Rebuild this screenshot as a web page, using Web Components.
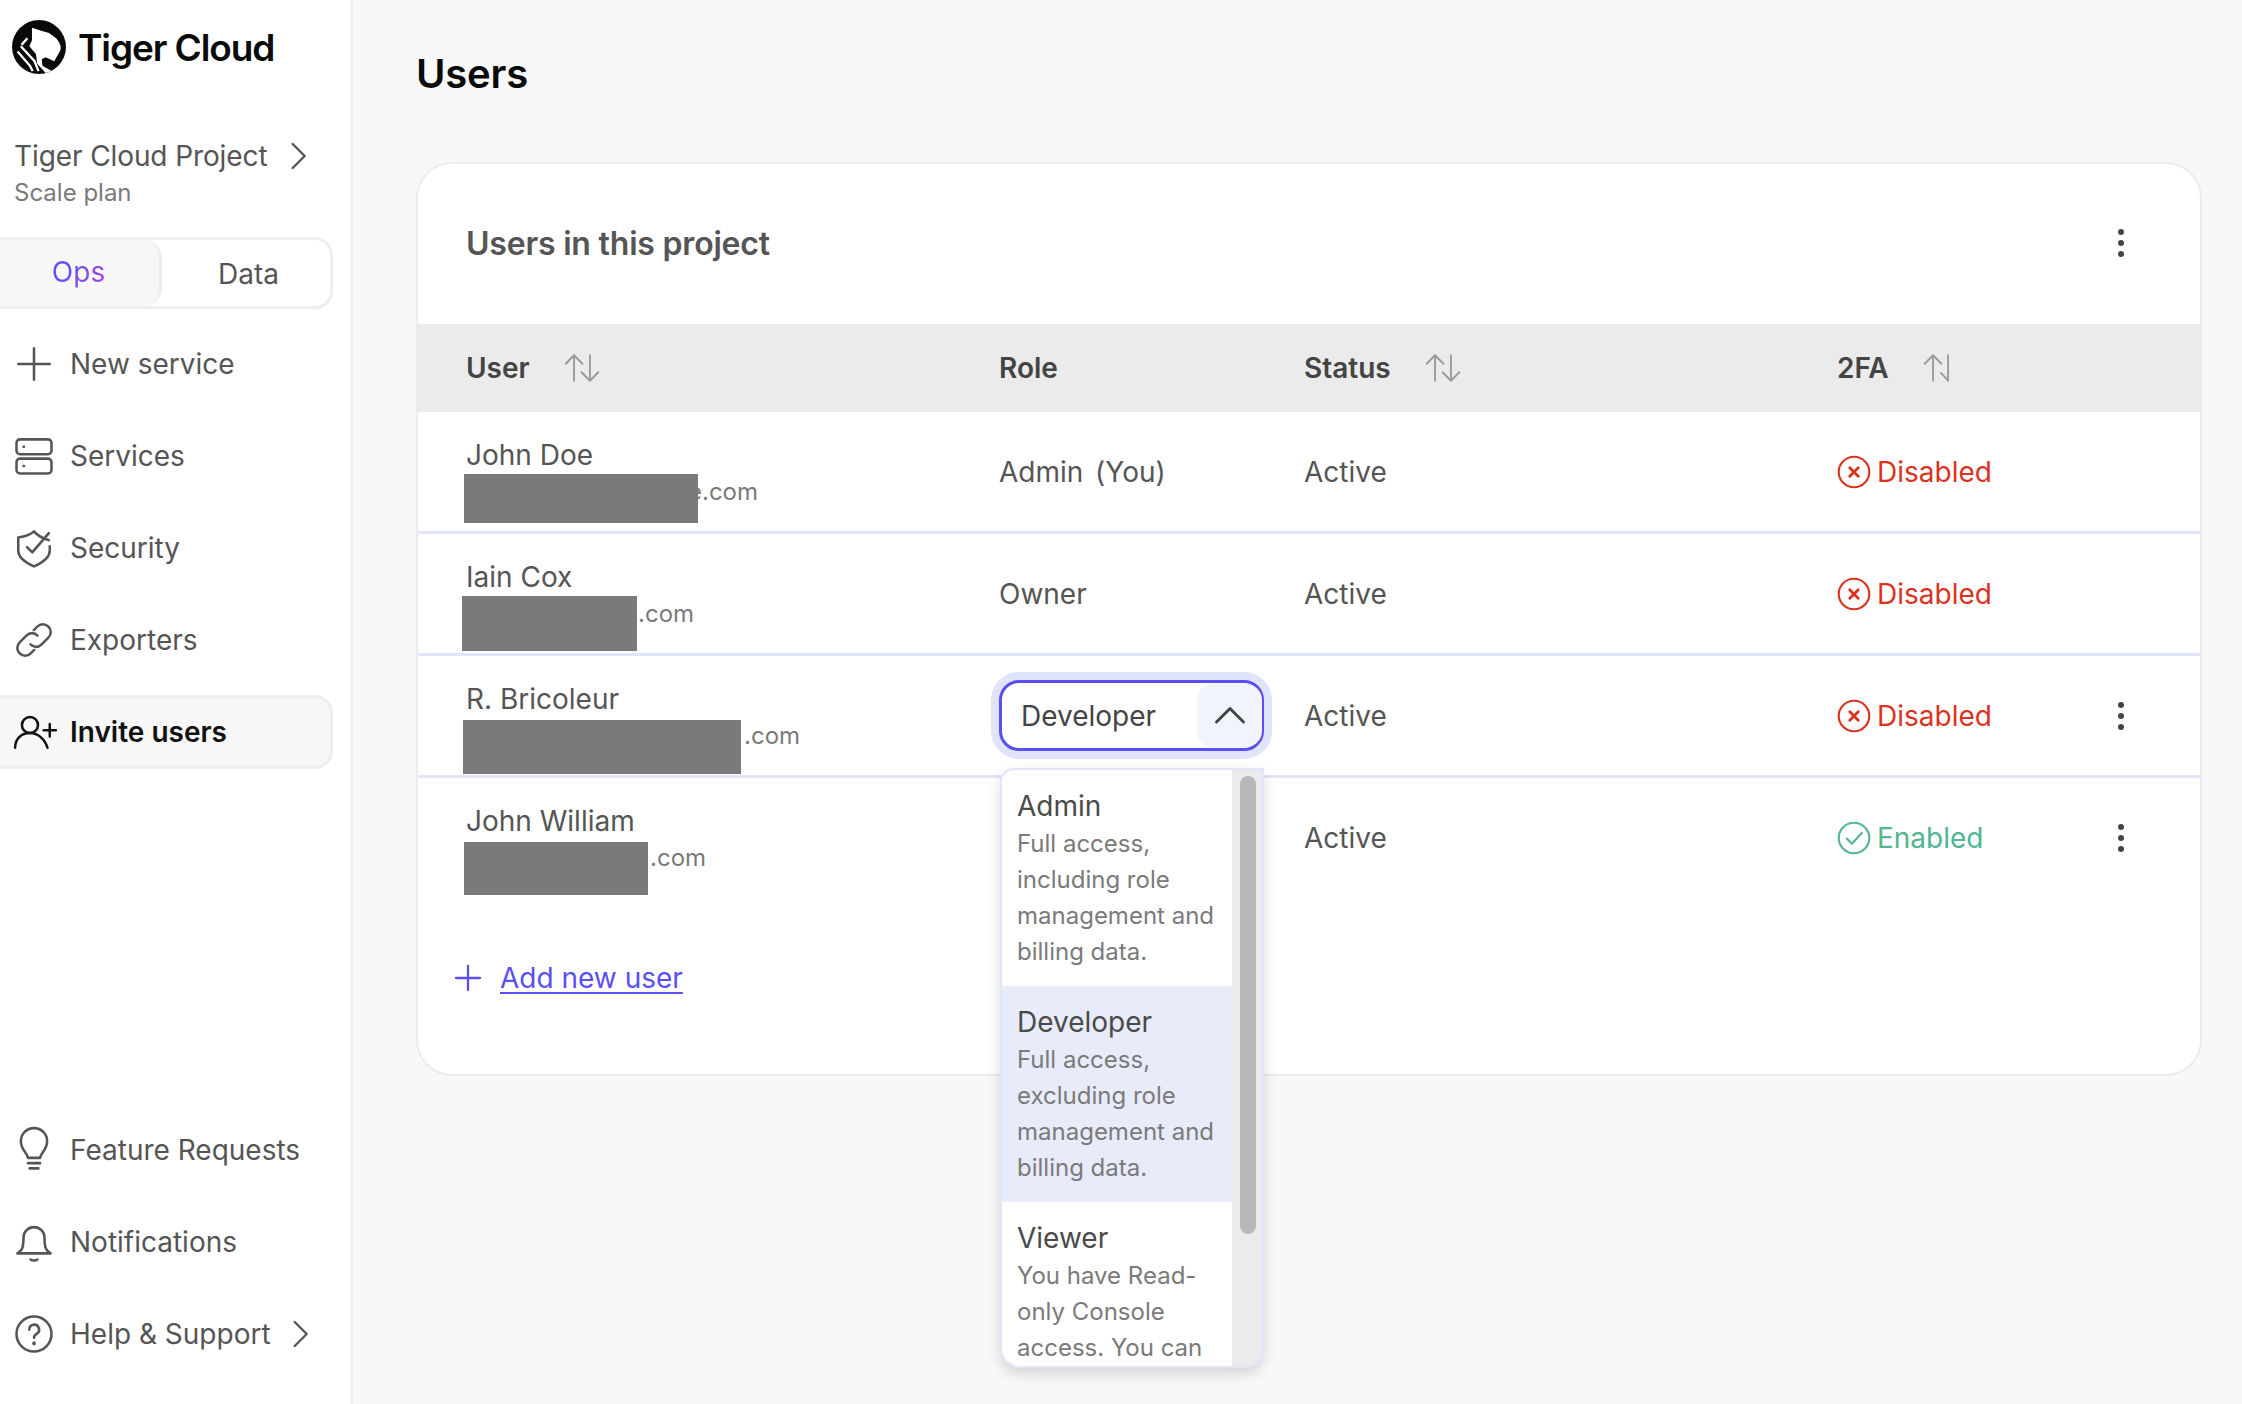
<!DOCTYPE html>
<html>
<head>
<meta charset="utf-8">
<title>Users</title>
<style>
  html, body { margin: 0; height: 100%; }
  body { font-family: Inter, "Noto Sans", sans-serif; background: #f8f8f8; }
  tc-app { height: 1404px; }
</style>
</head>
<body>
<tc-app>
  <tc-sidebar slot="side"></tc-sidebar>
  <tc-users slot="main"></tc-users>
</tc-app>

<script>
const ICONS = {
  plus: '<path d="M12 3v18M3 12h18"/>',
  chevron: '<path d="M8 3l9 9-9 9"/>',
  services: '<rect x="2" y="2.5" width="20" height="8.5" rx="2"/><rect x="2" y="13.5" width="20" height="8.5" rx="2"/><path d="M6 6.7h.3M6 17.7h.3"/>',
  shield: '<path d="M20.500 7.500C17 6.500 14 5 12 2.500 10 4.500 6.500 5.500 3 6v7.500c0 3.500 3.500 6.500 9 9 5.500-2.500 9-5.500 9-9V11"/><path d="M8 11.500l3 3 9.500-11"/>',
  link: '<path d="M10 14.500c1.800 1.900 4.400 1.900 6.200.1l4-4c1.800-1.800 1.800-4.600 0-6.300-1.800-1.800-4.600-1.800-6.300 0l-2 2"/><path d="M14 9.500c-1.800-1.900-4.400-1.900-6.200-.1l-4 4c-1.800 1.800-1.800 4.600 0 6.300 1.800 1.800 4.600 1.800 6.300 0l2-2"/>',
  invite: '<circle cx="9.700" cy="8" r="4.600"/><path d="M1.200 21c0-5 3.500-8.400 8.500-8.400 4.500 0 8.500 3.400 10 8.400M21 7.500v7M17.500 11h7"/>',
  bulb: '<path d="M8.500 16.500h7c.3-3 4-4.500 4-9.500a7.500 7.500 0 0 0-15 0c0 5 3.700 6.500 4 9.500zM8.500 19.500h7M9.500 22.500h5"/>',
  bell: '<path d="M2.500 18.500c2.500-1.500 3.500-3 3.500-9a6 6 0 0 1 12 0c0 6 1 7.500 3.500 9zM10 22c1 .8 3 .8 4 0"/>',
  help: '<circle cx="12" cy="12" r="10"/><path d="M9.300 9.500a2.800 2.800 0 1 1 4.200 2.400c-1 .6-1.500 1.200-1.500 2.300"/><path d="M12 17.200v.3" stroke-width="2"/>',
  sort: '<path d="M6.400 21V3M.5 9l5.900-6 5.900 6M17.600 3v18M11.700 15l5.900 6 5.900-6"/>',
  sortHalf: '<path d="M6.400 21V3M.5 9l5.900-6 5.900 6M17 3v18M12 15.500l5 5.500"/>',
  cross: '<circle cx="12" cy="12" r="10.800"/><path d="M9 9l6 6M15 9l-6 6" stroke-width="2"/>',
  check: '<circle cx="12" cy="12" r="10.800"/><path d="M7 12.500l3.500 3.500L17.500 8.500"/>',
  up: '<path d="M3 16l9-9 9 9"/>'
};

function icon(name, size, width = 1.6) {
  return `<svg width="${size}" height="${size}" viewBox="0 0 24 24" fill="none" stroke="currentColor" stroke-width="${width}" stroke-linecap="round" stroke-linejoin="round" style="flex:none;overflow:visible" aria-hidden="true">${ICONS[name]}</svg>`;
}

class TcApp extends HTMLElement {
  constructor() {
    super();
    this.attachShadow({ mode: "open" });
    this.shadowRoot.innerHTML = `
      <style>
        :host { display: flex; width: 100%; }
        .side { flex: 0 0 353px; display: flex; }
        .main { flex: 1; min-width: 0; display: flex; }
      </style>
      <div class="side"><slot name="side"></slot></div>
      <div class="main"><slot name="main"></slot></div>`;
  }
}

class TcNavItem extends HTMLElement {
  constructor() {
    super();
    this.attachShadow({ mode: "open" });
    const ic = this.getAttribute("icon");
    const more = this.hasAttribute("more");
    this.shadowRoot.innerHTML = `
      <style>
        :host { display: flex; align-items: center; height: 74px; margin-top: 18px; margin-left: -2px; width: 335px; box-sizing: border-box;
          padding-left: 15px; gap: 15px; color: #555; font-size: 28px; white-space: nowrap; border: 3px solid transparent; border-left: 0; border-radius: 0 18px 18px 0; }
        :host([active]) { background: #f7f7f7; border-color: #eee; color: #111; font-weight: 600; }
        .ic { flex: none; width: 42px; height: 38px; display: flex; align-items: center; justify-content: center; }
        .more { margin-left: -2px; display: flex; }
      </style>
      <span class="ic">${icon(ic, 42, 1.45)}</span>
      <span><slot></slot></span>
      ${more ? `<span class="more">${icon("chevron", 32, 1.8)}</span>` : ""}`;
  }
}

class TcTabs extends HTMLElement {
  constructor() {
    super();
    this.attachShadow({ mode: "open" });
    this.shadowRoot.innerHTML = `
      <style>
        :host { display: flex; width: 335px; height: 72px; margin-left: -2px; box-sizing: border-box; border: 3px solid #eee; border-left: 0; border-radius: 0 18px 18px 0; font-size: 28px; background: #fff; }
        span { display: flex; align-items: center; justify-content: center; }
        .on { flex: 0 0 164px; box-sizing: border-box; background: #f7f7f7; border-right: 3px solid #eee; border-radius: 0 18px 18px 0; padding-bottom: 3px; }
        .on b { font-weight: 400; background: linear-gradient(135deg, #5f52f5 30%, #b03fdc 100%); -webkit-background-clip: text; background-clip: text; color: transparent; }
        .off { flex: 1; color: #555; padding: 2px 0 0 5px; }
      </style>
      <span class="on"><b>Ops</b></span>
      <span class="off">Data</span>`;
  }
}

class TcSidebar extends HTMLElement {
  constructor() {
    super();
    this.attachShadow({ mode: "open" });
    this.shadowRoot.innerHTML = `
      <style>
        :host { display: flex; flex-direction: column; flex: 1; height: 1404px; box-sizing: border-box; background: #fff; border-right: 3px solid #f0f0f0; padding-top: 20px; }
        .brand { display: flex; align-items: center; gap: 12px; padding-left: 12px; height: 54px; font-size: 37px; font-weight: 600; letter-spacing: -1.1px; color: #0a0a0a; }
        .project { display: flex; align-items: center; margin: 64px 0 0 14px; font-size: 28px; color: #555; line-height: 36px; letter-spacing: -0.1px; }
        .project svg { margin-left: 15px; }
        .plan { margin: 3px 0 28px 14px; font-size: 24px; line-height: 32px; color: #7a7a7a; }
        .spacer { flex: 1; }
        .bottom { padding-bottom: 33px; }
      </style>
      <div class="brand">
        <svg width="54" height="54" viewBox="15 20 165 165" aria-hidden="true">
          <circle cx="97.500" cy="102.500" r="82.500" fill="#0a0a0a"/>
          <path fill="#fff" d="M76 44L102 52L128 60L150 76C163 92 168 105 160 118L144 146L118 134L106 140L108 160L136 176L118 182L92 154L88 124L68 100L76 82Z"/>
          <path fill="none" stroke="#fff" stroke-width="7" d="M62 76L44 96M42 100L84 146L96 176M32 116L70 160L78 176"/>
        </svg>
        <span>Tiger Cloud</span>
      </div>
      <div class="project"><span>Tiger Cloud Project</span>${icon("chevron", 32, 1.8)}</div>
      <div class="plan">Scale plan</div>
      <tc-tabs></tc-tabs>
      <tc-nav-item icon="plus">New service</tc-nav-item>
      <tc-nav-item icon="services">Services</tc-nav-item>
      <tc-nav-item icon="shield">Security</tc-nav-item>
      <tc-nav-item icon="link">Exporters</tc-nav-item>
      <tc-nav-item icon="invite" active>Invite users</tc-nav-item>
      <div class="spacer"></div>
      <div class="bottom">
        <tc-nav-item icon="bulb">Feature Requests</tc-nav-item>
        <tc-nav-item icon="bell">Notifications</tc-nav-item>
        <tc-nav-item icon="help" more>Help &amp; Support</tc-nav-item>
      </div>`;
  }
}

const GRID = "grid-template-columns: 533px 305px 533px 1fr;";

class TcHeadCell extends HTMLElement {
  constructor() {
    super();
    this.attachShadow({ mode: "open" });
    const s = this.getAttribute("sort");
    this.shadowRoot.innerHTML = `
      <style>
        :host { display: flex; align-items: center; gap: 35px; font-size: 28px; font-weight: 600; color: #444; }
        svg { color: #999; }
      </style>
      <span><slot></slot></span>${s ? icon(s, 34, 1.3) : ""}`;
  }
}

class TcStatus extends HTMLElement {
  constructor() {
    super();
    this.attachShadow({ mode: "open" });
    const on = this.hasAttribute("on");
    this.shadowRoot.innerHTML = `
      <style>
        :host { display: flex; align-items: center; gap: 6px; font-size: 28px; color: ${on ? "#52b490" : "#d9331f"}; }
      </style>
      ${icon(on ? "check" : "cross", 34, 1.5)}<span>${on ? "Enabled" : "Disabled"}</span>`;
  }
}

class TcDots extends HTMLElement {
  constructor() {
    super();
    this.attachShadow({ mode: "open" });
    this.shadowRoot.innerHTML = `
      <style>
        :host { display: flex; flex-direction: column; gap: 5px; width: 6px; }
        i { display: block; width: 6px; height: 6px; border-radius: 50%; background: #444; }
      </style>
      <i></i><i></i><i></i>`;
  }
}

// une ligne du tableau : nom, email masqué, rôle, statut, 2FA
class TcUserRow extends HTMLElement {
  constructor() {
    super();
    this.attachShadow({ mode: "open" });
    const [mx, my, mw, mh] = this.getAttribute("mask").split(",");
    const pad = this.getAttribute("pad");
    const on = this.hasAttribute("enabled");
    this.shadowRoot.innerHTML = `
      <style>
        :host { display: grid; ${GRID} height: 122px; box-sizing: border-box; padding-left: 48px; align-items: center; position: relative; color: #555; font-size: 28px; border-bottom: 3px solid #e1e6fa; }
        :host([last]) { border-bottom-color: transparent; }
        .who { display: flex; flex-direction: column; margin-top: 2px; }
        .name { line-height: 36px; }
        .mail { font-size: 24px; line-height: 36px; color: #7a7a7a; position: relative; top: 1px; }
        .mask { position: absolute; background: #7a7a7a; left: ${mx}px; top: ${my}px; width: ${mw}px; height: ${mh}px; }
        .tfa { display: flex; align-items: center; justify-content: space-between; padding-right: 76px; }
      </style>
      <div class="who">
        <span class="name"><slot></slot></span>
        <span class="mail" style="padding-left:${pad}px">${this.getAttribute("mail")}</span>
      </div>
      <div class="role"><slot name="role"></slot></div>
      <div>Active</div>
      <div class="tfa">
        <tc-status ${on ? "on" : ""}></tc-status>
        ${this.hasAttribute("menu") ? "<tc-dots></tc-dots>" : ""}
      </div>
      <div class="mask"></div>`;
  }
}

class TcRoleOption extends HTMLElement {
  constructor() {
    super();
    this.attachShadow({ mode: "open" });
    this.shadowRoot.innerHTML = `
      <style>
        :host { display: block; box-sizing: border-box; height: 216px; padding: 18px 8px 0 15px; }
        :host([selected]) { background: #e8ebfa; }
        .t { font-size: 28px; line-height: 36px; color: #4a4a4a; }
        .d { font-size: 24px; line-height: 36px; color: #7a7a7a; margin-top: 2px; }
      </style>
      <div class="t">${this.getAttribute("title")}</div>
      <div class="d"><slot></slot></div>`;
  }
}

class TcRoleSelect extends HTMLElement {
  constructor() {
    super();
    this.attachShadow({ mode: "open" });
    this.shadowRoot.innerHTML = `
      <style>
        :host { display: block; position: relative; width: 265px; height: 71px; }
        .box { display: flex; align-items: stretch; height: 100%; box-sizing: border-box; border: 3px solid #5a4ff3; border-radius: 20px; background: #fff; box-shadow: 0 0 0 8px #dfe4fa; font-size: 28px; color: #444; }
        .val { flex: 1; display: flex; align-items: center; padding-left: 19px; }
        .btn { flex: 0 0 65px; display: flex; align-items: center; justify-content: center; background: #f1f3fd; border-radius: 16px; margin: 1px -1px 1px 1px; color: #444; }
        .menu { position: absolute; z-index: 5; left: 1px; top: 88px; width: 264px; height: 600px; box-sizing: border-box; display: flex; overflow: hidden; background: #fff; border: 2px solid #e1e6fa; border-radius: 14px 0 20px 20px; box-shadow: 0 6px 14px rgba(0,0,0,.14); }
        .list { flex: 1; min-width: 0; height: 100%; overflow: hidden; }
        .track { flex: 0 0 30px; background: #ebebeb; padding: 6px 6px 0 8px; box-sizing: border-box; }
        .thumb { height: 458px; background: #b9b9b9; border-radius: 8px; }
      </style>
      <div class="box">
        <span class="val">Developer</span>
        <span class="btn">${icon("up", 36, 1.9)}</span>
      </div>
      <div class="menu">
        <div class="list"><slot></slot></div>
        <div class="track"><div class="thumb"></div></div>
      </div>`;
  }
}

class TcUsers extends HTMLElement {
  constructor() {
    super();
    this.attachShadow({ mode: "open" });
    this.shadowRoot.innerHTML = `
      <style>
        :host { display: block; flex: 1; box-sizing: border-box; padding: 0 40px 0 63px; }
        h1 { margin: 0; height: 162px; padding-top: 50px; box-sizing: border-box; font-size: 40px; line-height: 48px; font-weight: 600; color: #0a0a0a; letter-spacing: -0.2px; }
        .card { background: #fff; border: 2px solid #ececec; border-radius: 36px; height: 914px; box-sizing: border-box; }
        .top { display: flex; align-items: center; justify-content: space-between; height: 160px; box-sizing: border-box; padding: 0 76px 2px 48px; font-size: 32px; font-weight: 600; color: #555; letter-spacing: -0.2px; }
        .head { display: grid; ${GRID} height: 88px; margin: 0 -2px; padding-left: 50px; align-items: center; background: #ebebeb; }
        .add { display: flex; align-items: center; gap: 16px; margin: 61px 0 0 34px; font-size: 28px; color: #5a4ff3; }
        .add span { text-decoration: underline; text-underline-offset: 4px; }
      </style>
      <h1>Users</h1>
      <div class="card">
        <div class="top"><span>Users in this project</span><tc-dots></tc-dots></div>
        <div class="head">
          <tc-head-cell sort="sort">User</tc-head-cell>
          <tc-head-cell>Role</tc-head-cell>
          <tc-head-cell sort="sort">Status</tc-head-cell>
          <tc-head-cell sort="sortHalf">2FA</tc-head-cell>
        </div>
        <tc-user-row mail="e.com" pad="222" mask="46,62,234,49">John Doe<span slot="role" style="word-spacing:-2px">Admin&nbsp; (You)</span></tc-user-row>
        <tc-user-row mail=".com" pad="172" mask="44,62,175,55">Iain Cox<span slot="role">Owner</span></tc-user-row>
        <tc-user-row mail=".com" pad="278" mask="45,64,278,54" menu>R. Bricoleur
          <tc-role-select slot="role">
            <tc-role-option title="Admin">Full access, including role management and billing data.</tc-role-option>
            <tc-role-option title="Developer" selected>Full access, excluding role management and billing data.</tc-role-option>
            <tc-role-option title="Viewer">You have Read-only Console access. You can</tc-role-option>
          </tc-role-select>
        </tc-user-row>
        <tc-user-row mail=".com" pad="184" mask="46,64,184,53" menu enabled last>John William</tc-user-row>
        <div class="add">${icon("plus", 32, 1.7)}<span>Add new user</span></div>
      </div>`;
  }
}

customElements.define("tc-app", TcApp);
customElements.define("tc-nav-item", TcNavItem);
customElements.define("tc-tabs", TcTabs);
customElements.define("tc-sidebar", TcSidebar);
customElements.define("tc-head-cell", TcHeadCell);
customElements.define("tc-status", TcStatus);
customElements.define("tc-dots", TcDots);
customElements.define("tc-user-row", TcUserRow);
customElements.define("tc-role-option", TcRoleOption);
customElements.define("tc-role-select", TcRoleSelect);
customElements.define("tc-users", TcUsers);
</script>
</body>
</html>
